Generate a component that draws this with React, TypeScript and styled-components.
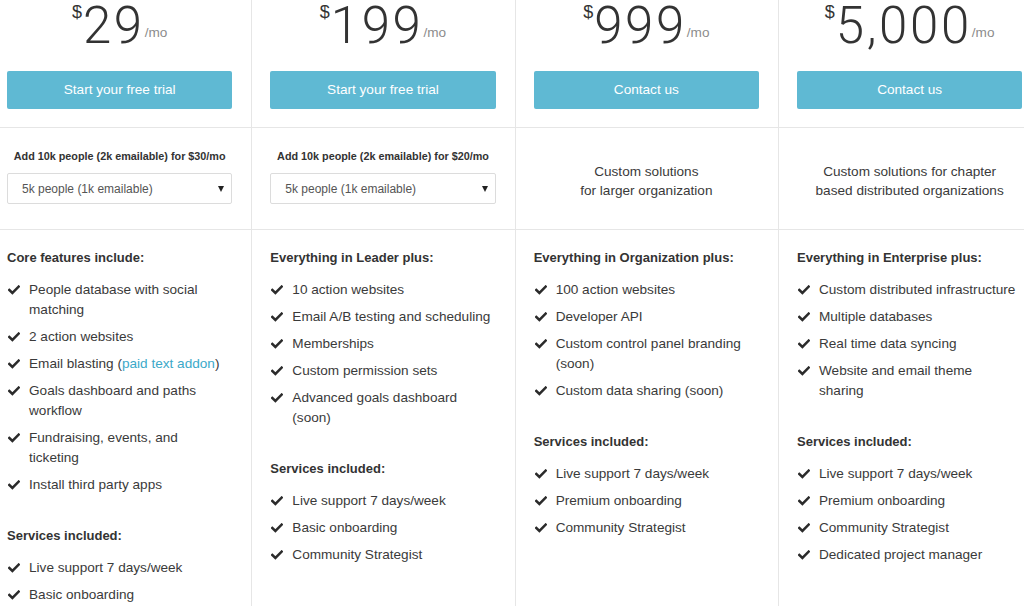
import React from "react";
import styled, { createGlobalStyle } from "styled-components";

const GlobalStyle = createGlobalStyle`
  html, body {
    margin: 0;
    padding: 0;
    background: #fff;
    overflow: hidden;
  }
  body {
    font-family: "Liberation Sans", Arial, sans-serif;
    color: #333;
  }
  * {
    box-sizing: border-box;
  }
`;

/* Layout */
const Table = styled.div`
  display: grid;
  grid-template-columns: repeat(4, 263.33px);
  margin-left: -12px;
`;

const Cell = styled.div`
  border-left: 1px solid #e6e6e6;
  padding: 0 19px 0 18px;
`;

const PriceCell = styled(Cell)`
  display: flex;
  flex-direction: column;
  padding-top: 1px;
  padding-bottom: 18px;
  border-bottom: 1px solid #e6e6e6;
`;

const AddonCell = styled(Cell)`
  display: flex;
  flex-direction: column;
  justify-content: center;
  height: 102px;
  border-bottom: 1px solid #e6e6e6;
`;

const FeatureCell = styled(Cell)`
  padding-top: 18px;
  min-height: 400px;
`;

/* Price */
const PriceRow = styled.div`
  display: flex;
  justify-content: center;
  align-items: flex-start;
  height: 50px;
  color: #333;
`;

const Dollar = styled.span`
  font-size: 18px;
  line-height: 18px;
  margin-top: 2px;
  margin-right: 1px;
`;

const Amount = styled.span`
  font-family: Roboto, "Liberation Sans", sans-serif;
  font-weight: 300;
  font-size: 51px;
  line-height: 50px;
  letter-spacing: 2.6px;
`;

const PerMonth = styled.span`
  font-size: 13.6px;
  line-height: 14px;
  margin-top: 25px;
  color: #8c8c8c;
`;

const Button = styled.button`
  margin-top: 20px;
  width: 100%;
  height: 38px;
  border: none;
  border-radius: 2px;
  background: #5fb9d3;
  color: #fff;
  font-family: "Liberation Sans", Arial, sans-serif;
  font-size: 13.6px;
  padding: 0 0 1px;
  cursor: pointer;
`;

/* Addon */
const AddonLabel = styled.div`
  font-size: 10.8px;
  font-weight: 700;
  line-height: 14px;
  text-align: center;
  color: #333;
  margin-top: -4px;
  margin-bottom: 10px;
`;

const SelectBox = styled.div`
  position: relative;
  height: 31px;
  border: 1px solid #dcdcdc;
  border-radius: 2px;
  padding-left: 14px;
  display: flex;
  align-items: center;
  font-size: 12px;
  color: #555;
  background: #fff;
`;

const Caret = styled.span`
  position: absolute;
  right: 7px;
  top: 12px;
  width: 0;
  height: 0;
  border-left: 3px solid transparent;
  border-right: 3px solid transparent;
  border-top: 6px solid #222;
`;

const CustomText = styled.p`
  margin: 5px 0 0;
  font-size: 13.6px;
  line-height: 19px;
  text-align: center;
  color: #3a3a3a;
`;

/* Features */
const SectionTitle = styled.h4<{ $spaced?: boolean }>`
  margin: ${({ $spaced }) => ($spaced ? "31px" : "0")} 0 12px;
  font-size: 13px;
  font-weight: 700;
  line-height: 20px;
  color: #333;
`;

const List = styled.ul`
  list-style: none;
  margin: 0;
  padding: 0;
`;

const Item = styled.li`
  display: flex;
  align-items: flex-start;
  font-size: 13.6px;
  line-height: 20px;
  color: #3a3a3a;
  margin-bottom: 7px;
`;

const ItemText = styled.span`
  max-width: 199px;
`;

const CheckWrap = styled.span`
  display: flex;
  flex: 0 0 22px;
  height: 20px;
  align-items: center;
  padding-left: 1px;

  svg {
    display: block;
  }
`;

const Link = styled.a`
  color: #3ba9c9;
  text-decoration: none;
`;

const Check = () => (
  <CheckWrap>
    <svg width="12" height="10" viewBox="0 0 12 10">
      <path
        d="M1.3 5 L4.4 8 L10.7 1.6"
        fill="none"
        stroke="#2b2b2b"
        strokeWidth="2.5"
        strokeLinecap="square"
      />
    </svg>
  </CheckWrap>
);

type Plan = {
  amount: string;
  cta: string;
  addon?: string;
  custom?: string[];
  title: string;
  features: React.ReactNode[];
  services: string[];
};

const plans: Plan[] = [
  {
    amount: "29",
    cta: "Start your free trial",
    addon: "Add 10k people (2k emailable) for $30/mo",
    title: "Core features include:",
    features: [
      "People database with social matching",
      "2 action websites",
      <>
        Email blasting (<Link href="#">paid text addon</Link>)
      </>,
      "Goals dashboard and paths workflow",
      "Fundraising, events, and ticketing",
      "Install third party apps",
    ],
    services: ["Live support 7 days/week", "Basic onboarding"],
  },
  {
    amount: "199",
    cta: "Start your free trial",
    addon: "Add 10k people (2k emailable) for $20/mo",
    title: "Everything in Leader plus:",
    features: [
      "10 action websites",
      "Email A/B testing and scheduling",
      "Memberships",
      "Custom permission sets",
      "Advanced goals dashboard (soon)",
    ],
    services: [
      "Live support 7 days/week",
      "Basic onboarding",
      "Community Strategist",
    ],
  },
  {
    amount: "999",
    cta: "Contact us",
    custom: ["Custom solutions", "for larger organization"],
    title: "Everything in Organization plus:",
    features: [
      "100 action websites",
      "Developer API",
      "Custom control panel branding (soon)",
      "Custom data sharing (soon)",
    ],
    services: [
      "Live support 7 days/week",
      "Premium onboarding",
      "Community Strategist",
    ],
  },
  {
    amount: "5,000",
    cta: "Contact us",
    custom: ["Custom solutions for chapter", "based distributed organizations"],
    title: "Everything in Enterprise plus:",
    features: [
      "Custom distributed infrastructure",
      "Multiple databases",
      "Real time data syncing",
      "Website and email theme sharing",
    ],
    services: [
      "Live support 7 days/week",
      "Premium onboarding",
      "Community Strategist",
      "Dedicated project manager",
    ],
  },
];

export default function App() {
  return (
    <>
      <GlobalStyle />
      <Table>
        {plans.map((p) => (
          <PriceCell key={"p" + p.amount}>
            <PriceRow>
              <Dollar>$</Dollar>
              <Amount>{p.amount}</Amount>
              <PerMonth>/mo</PerMonth>
            </PriceRow>
            <Button>{p.cta}</Button>
          </PriceCell>
        ))}
        {plans.map((p) => (
          <AddonCell key={"a" + p.amount}>
            {p.addon ? (
              <>
                <AddonLabel>{p.addon}</AddonLabel>
                <SelectBox>
                  5k people (1k emailable)
                  <Caret />
                </SelectBox>
              </>
            ) : (
              <CustomText>
                {p.custom?.[0]}
                <br />
                {p.custom?.[1]}
              </CustomText>
            )}
          </AddonCell>
        ))}
        {plans.map((p) => (
          <FeatureCell key={"f" + p.amount}>
            <SectionTitle>{p.title}</SectionTitle>
            <List>
              {p.features.map((f, i) => (
                <Item key={i}>
                  <Check />
                  <ItemText>{f}</ItemText>
                </Item>
              ))}
            </List>
            <SectionTitle $spaced>Services included:</SectionTitle>
            <List>
              {p.services.map((s) => (
                <Item key={s}>
                  <Check />
                  <ItemText>{s}</ItemText>
                </Item>
              ))}
            </List>
          </FeatureCell>
        ))}
      </Table>
    </>
  );
}
